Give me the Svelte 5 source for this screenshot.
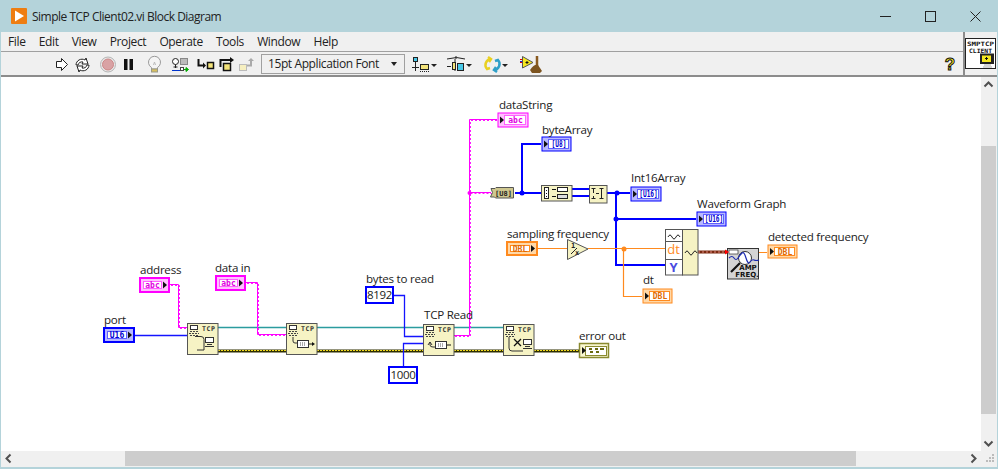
<script>
  const menus = ['File', 'Edit', 'View', 'Project', 'Operate', 'Tools', 'Window', 'Help'];

  const labels = [
    ['address', 140, 275], ['data in', 215, 273], ['port', 104, 325],
    ['bytes to read', 366, 284], ['TCP Read', 424, 320], ['error out', 579, 341],
    ['dataString', 499, 110], ['byteArray', 542, 135], ['Int16Array', 631, 183],
    ['sampling frequency', 507, 239], ['dt', 643, 285], ['Waveform Graph', 697, 209],
    ['detected frequency', 768, 242]
  ];

  // controls have the heavy border and the arrow on the right, indicators the thin one
  const terminals = [
    { x: 139, y: 278, w: 31, h: 16, type: 't-str', text: 'abc', ctl: true },
    { x: 215, y: 276, w: 31, h: 16, type: 't-str', text: 'abc', ctl: true },
    { x: 103, y: 328, w: 32, h: 16, type: 't-int', text: 'U16', ctl: true },
    { x: 506, y: 242, w: 32, h: 15, type: 't-dbl', text: 'DBL', ctl: true },
    { x: 497, y: 113, w: 32, h: 16, type: 't-str', text: 'abc' },
    { x: 541, y: 137, w: 31, h: 16, type: 't-int', text: '[U8]' },
    { x: 630, y: 187, w: 32, h: 16, type: 't-int', text: '[U16]' },
    { x: 696, y: 212, w: 31, h: 16, type: 't-int', text: '[U16]' },
    { x: 642, y: 289, w: 31, h: 16, type: 't-dbl', text: 'DBL' },
    { x: 767, y: 245, w: 31, h: 15, type: 't-dbl', text: 'DBL' }
  ];

  const tcpNodes = [
    { x: 187, y: 324, kind: 'open' },
    { x: 286, y: 324, kind: 'write' },
    { x: 423, y: 325, kind: 'read' },
    { x: 503, y: 325, kind: 'close' }
  ];

  const strWires = [
    'M170 285.5H178.5V328.5H187',
    'M246 283.5H257.5V335.5H286',
    'M454 336.5H469.5V120.5H497',
    'M469.5 193.5H491'
  ];

  // the bracketed array labels are squeezed to fit the box
  const squeeze = (text) => (text.startsWith('[') ? text.length * 3.7 : undefined);
</script>

{#snippet grid(x, y)}
  <rect x={x + 0.5} y={y + 0.5} width="11" height="7" fill="#fff" stroke="#333" />
  <path d="M{x + 3} {y + 3}h6M{x + 3} {y + 5}h6" stroke="#555" stroke-dasharray="1 1" fill="none" />
{/snippet}

{#snippet pc(x, y)}
  <rect x={x + 0.5} y={y + 0.5} width="8" height="5" fill="#fff" stroke="#333" />
  <path d="M{x + 2} {y + 7.5}h5M{x} {y + 9.5}h9" stroke="#333" fill="none" />
{/snippet}

<div class="window">
  <header class="titlebar">
    <svg class="appicon" width="16" height="16" viewBox="0 0 16 16">
      <rect width="16" height="16" rx="1" fill="#ee7d11" />
      <path d="M4 2.5L13 8L4 13.5Z" fill="#fff" />
    </svg>
    <span class="title">Simple TCP Client02.vi Block Diagram</span>
    <div class="controls">
      <svg width="11" height="11" viewBox="0 0 11 11"><path d="M0 5.5H11" stroke="#222" /></svg>
      <svg width="11" height="11" viewBox="0 0 11 11"><rect x="0.5" y="0.5" width="10" height="10" fill="none" stroke="#222" /></svg>
      <svg width="11" height="11" viewBox="0 0 11 11"><path d="M0.5 0.5L10.5 10.5M10.5 0.5L0.5 10.5" stroke="#222" /></svg>
    </div>
  </header>

  <div class="top">
    <div class="bars">
      <nav class="menubar">
        {#each menus as m}<span>{m}</span>{/each}
      </nav>
      <div class="toolbar">
        <svg width="206" height="23" viewBox="52 53 206 23">
          <path d="M56.5 62.5h5v-3l6 6l-6 6v-3h-5z" fill="#fff" stroke="#222" />
          <path d="M76 66a6 6 0 0 1 9-5l1-2 2 6-6 0 1-2a4 4 0 0 0-5 3zM89 66a6 6 0 0 1-9 5l-1 2-2-6 6 0-1 2a4 4 0 0 0 5-3z" fill="#fff" stroke="#222" />
          <circle cx="108" cy="65.5" r="7.5" fill="#e8e8e8" stroke="#b5b5b5" />
          <circle cx="108" cy="65.5" r="5.5" fill="#d9a2a4" stroke="#c88" />
          <rect x="124" y="60" width="3.5" height="11" fill="#111" />
          <rect x="129.5" y="60" width="3.5" height="11" fill="#111" />
          <path d="M151.5 68.5a6 6 0 1 1 6 0v1.5h-6z" fill="#f4f4f4" stroke="#999" />
          <path d="M153.5 66l1-3 1 3" fill="none" stroke="#bbb" />
          <rect x="151.5" y="70" width="6" height="3" fill="#d8c060" stroke="#998" />
          <circle cx="175.5" cy="62.5" r="3" fill="#fff" stroke="#222" />
          <path d="M175.5 65.5V69M173.5 68h4" stroke="#222" />
          <rect x="180.5" y="59.5" width="7" height="6" fill="#bbb" stroke="#888" />
          <path d="M172 71.5H180" stroke="#0033cc" />
          <rect x="180.5" y="68.5" width="3" height="3" fill="#fff" stroke="#444" />
          <path d="M184 70.5h3M186 68.5l2.5 2-2.5 2z" stroke="#0a0" fill="#0a0" />
          <path d="M198.5 60v6.5H204" fill="none" stroke="#111" stroke-width="2" />
          <path d="M203 63.5l3 3-3 3z" fill="#111" />
          <rect x="207.5" y="63.5" width="6" height="6" fill="#f3e37a" stroke="#111" stroke-width="1.5" />
          <path d="M220.5 68v-7h10" fill="none" stroke="#111" stroke-width="2" />
          <path d="M230 58l4 3-4 3z" fill="#111" />
          <rect x="223.5" y="64.5" width="7" height="7" fill="#f3e37a" stroke="#111" stroke-width="1.5" />
          <rect x="239.5" y="65.5" width="7" height="6" fill="#f6efc0" stroke="#bbb" />
          <path d="M247 66.5h4v-5" fill="none" stroke="#aaa" stroke-width="2" />
          <path d="M248 62l3-3 3 3z" fill="#aaa" />
        </svg>
        <div class="fontbox">
          <span>15pt Application Font</span>
          <i class="caret"></i>
        </div>
        <svg class="tools" width="140" height="23" viewBox="408 53 140 23">
          <rect x="413.5" y="58.5" width="4" height="4" fill="#48c8e8" stroke="#222" />
          <path d="M415.5 63v9M412 68.5h7" stroke="#222" />
          <rect x="420.5" y="65.5" width="8" height="5" fill="#f3e37a" stroke="#222" />
          <path d="M420 72.5h9" stroke="#222" stroke-dasharray="1 1" />
          <path d="M431 65h6l-3 3z" fill="#222" />
          <path d="M447 60q10-3 18 0M456 57v3" fill="none" stroke="#222" />
          <path d="M447 67.5h4M455 60v12" stroke="#222" />
          <rect x="452.5" y="63.5" width="3" height="7" fill="#f3e37a" stroke="#222" />
          <rect x="457.5" y="64.5" width="6" height="7" fill="#48c8e8" stroke="#222" />
          <path d="M466 65h6l-3 3z" fill="#222" />
          <path d="M491 60a6 6 0 0 0-4 10l3-1M488 58l3 2-2 3" fill="none" stroke="#e8d020" stroke-width="2.5" />
          <path d="M494 71a6 6 0 0 0 4-10l-3 1M497 73l-3-2 2-3" fill="none" stroke="#2f9fc8" stroke-width="2.5" />
          <path d="M502 65h6l-3 3z" fill="#222" />
          <path d="M520 60.5h6M520 63.5h6" stroke="#d00" />
          <path d="M520 62.5h6" stroke="#22c" />
          <path d="M522.5 57.5L533 63.5L522.5 69z" fill="#f6e820" stroke="#555" />
          <path d="M525.5 63.5h3M527 62v3" stroke="#111" />
          <path d="M537 57v10" stroke="#8a5a20" stroke-width="2.5" />
          <path d="M530 71q4-6 8-5l4 6-2 2h-8z" fill="#7c5420" />
        </svg>
        <svg class="help" width="14" height="20" viewBox="0 0 14 20">
          <text x="7" y="16" text-anchor="middle" class="qmark">?</text>
        </svg>
      </div>
    </div>
    <div class="vipane">
      <svg width="31" height="32" viewBox="0 0 31 32">
        <rect x="0.5" y="0.5" width="30" height="30" fill="#fff" stroke="#222" />
        <text x="15.5" y="7.8" text-anchor="middle" class="vitext" textLength="27" lengthAdjust="spacingAndGlyphs">SMPTCP</text>
        <text x="15.5" y="15" text-anchor="middle" class="vitext" textLength="23" lengthAdjust="spacingAndGlyphs">CLIENT</text>
        <rect x="15" y="15.5" width="14" height="10.5" fill="#222" />
        <rect x="17" y="17.5" width="9" height="6.5" fill="#f6e820" />
        <path d="M20 20.5h3M21.5 19v3" stroke="#111" />
        <path d="M19 27h7M18 29h9" stroke="#aaa" />
      </svg>
    </div>
  </div>

  <div class="content">
    <div class="canvas">
      <svg class="diagram" width="980" height="374" viewBox="1 78 980 374">
        <!-- refnum and error wires -->
        <path class="wire refnum" d="M218 328.5H286M317 328.5H423M454 328.5H503" />
        <path class="wire err-base" d="M218 352H286M317 352H423M454 352H503M534 352H579" />
        <path class="wire err-top" d="M218 351.5H286M317 351.5H423M454 351.5H503M534 351.5H579" />

        <!-- scalar ints -->
        <path class="wire w-int" d="M135 336.5H187M394 296.5H404.5V337.5H423M403.5 367V344.5H423" />

        <!-- strings -->
        {#each strWires as d}
          <path class="wire w-str" {d} />
          <path class="wire w-str alt" {d} />
        {/each}

        <!-- arrays -->
        <path class="wire w-arr" d="M515 194H541M522 194V145H541M572 190H589M572 197H589M607 194H630M616 194V266H665M616 220H696" />

        <!-- doubles -->
        <path class="wire w-dbl" d="M538 249.5H567M588 249.5H665M623.5 249.5V297.5H642M759 253.5H767" />

        <!-- waveform -->
        <path class="wire wf-base" d="M698 253H728" />
        <path class="wire wf-top" d="M698 253H728" />

        <circle cx="469.5" cy="194" r="2" fill="#f0f" />
        <circle cx="522" cy="194" r="2.5" fill="#00f" />
        <circle cx="617" cy="194" r="2.5" fill="#00f" />
        <circle cx="616" cy="220" r="2.5" fill="#00f" />
        <circle cx="624" cy="250" r="2.5" fill="#ff8a1e" />

        {#each tcpNodes as n}
          <g transform="translate({n.x} {n.y})">
            <rect class="node" x="0.5" y="0.5" width="30.5" height="31" />
            <rect x="3.5" y="2.5" width="7" height="4" fill="#fff" stroke="#333" />
            <path d="M3 8.5h8M2 10.5h10M3 12.5h9" stroke="#444" stroke-dasharray="2 1" fill="none" />
            <text class="tcp" x="15" y="8">TCP</text>
            {#if n.kind === 'open'}
              <path d="M8 13.5h6q3 0 3 3V27H10" fill="none" stroke="#333" />
              {@render pc(18, 14)}
            {:else if n.kind === 'write'}
              <path d="M7 14v4q0 2 2 2h2" fill="none" stroke="#333" />
              {@render grid(11, 17)}
              <path d="M23 21h4" stroke="#111" />
              <path d="M26 19l3 2-3 2z" fill="#111" />
            {:else if n.kind === 'read'}
              <path d="M7 18l-2 3M7 18l2 3M7 18v3q0 2 3 2h2" fill="none" stroke="#333" />
              {@render grid(12, 17)}
              <path d="M24 21h4" stroke="#111" />
            {:else}
              <path d="M11 15l7 7M18 15l-7 7" stroke="#111" stroke-width="1.3" />
              <path d="M6 13v11q0 3 3 3h11" fill="none" stroke="#333" />
              {@render pc(20, 15)}
            {/if}
          </g>
        {/each}

        <!-- string to byte array cast -->
        <path d="M491 189.5h4l1-1h17.5v10.5h-18l-1-1h-4l2-4.5z" fill="#cfc78f" stroke="#555" />
        <text class="tiny" x="503.5" y="197" text-anchor="middle">[U8]</text>

        <!-- split array -->
        <rect class="node" x="541.5" y="186.5" width="30.5" height="15.5" />
        <rect x="544.5" y="188.5" width="4" height="11" fill="#fff" stroke="#222" />
        <path d="M546.5 191v1M546.5 194v1M546.5 197v1" stroke="#111" />
        <path d="M552 190.5h4M552 197.5h4" stroke="#111" />
        <rect x="557.5" y="188.5" width="10" height="4" fill="#fff" stroke="#222" />
        <rect x="557.5" y="195.5" width="10" height="4" fill="#ddd" stroke="#222" />

        <!-- join numbers -->
        <rect class="node" x="589.5" y="186.5" width="17.5" height="17.5" />
        <path d="M593.5 189v5M591.5 189.5h4M591.5 199.5h4M593.5 197v3M601.5 190v9M599.5 189.5h4M599.5 199.5h4" stroke="#222" fill="none" />
        <path d="M596 194.5h3" stroke="#222" />

        <!-- reciprocal -->
        <path d="M567.5 240.5L588 250L567.5 260.5z" fill="#f6f3c4" stroke="#555" />
        <text class="tiny" x="571" y="249">1</text>
        <path d="M571 255l6-6" stroke="#222" />
        <text class="tiny" x="575" y="256">x</text>

        <!-- build waveform -->
        <rect x="665.5" y="230.5" width="17" height="45.5" fill="#fff" stroke="#555" />
        <rect class="node" x="682.5" y="230.5" width="15.5" height="45.5" />
        <path d="M665 242.5h17M665 260.5h17" stroke="#555" />
        <path d="M668 238q2-4 4 0t4 0 4 0M685 254q2-4 4 0t4 0 4 0" fill="none" stroke="#222" />
        <text class="bundle-dt" x="673.5" y="255" text-anchor="middle">dt</text>
        <text class="bundle-y" x="673.5" y="273" text-anchor="middle">Y</text>

        <!-- amplitude and frequency -->
        <rect x="727.5" y="249.5" width="31" height="30.5" fill="#d4d4d4" stroke="#333" />
        <rect x="729" y="251" width="9" height="4" fill="#fff" stroke="#333" stroke-width="0.7" />
        <circle cx="745" cy="259" r="6.5" fill="#fff" stroke="#333" />
        <path d="M729 259q3-3 5 0t4 0 4-5 4 5 4 4 4-2 5 0" fill="none" stroke="#1a2ab0" stroke-width="1.2" />
        <path d="M740 264l-9 9" stroke="#111" stroke-width="2.2" />
        <text class="amp" x="748" y="271" text-anchor="middle">AMP</text>
        <text class="amp" x="747" y="278" text-anchor="middle">FREQ.</text>
        <path d="M725 250.5l4 2.5-4 2.5z" fill="#f00" />

        {#each terminals as t}
          <g class="term {t.type}" class:ctl={t.ctl}>
            <rect class="outer" x={t.x + 1} y={t.y + 1} width={t.w - 2} height={t.h - 2} />
            {#if t.ctl}
              <rect class="inner" x={t.x + 4.5} y={t.y + 4.5} width={t.w - 13} height={t.h - 9} />
              <text class="tlabel" x={t.x + (t.w - 4) / 2} y={t.y + t.h / 2 + 3} text-anchor="middle">{t.text}</text>
              <path d="M{t.x + t.w - 7} {t.y + t.h / 2 - 3.5}l4 3.5-4 3.5z" fill="#111" />
            {:else}
              <rect class="inner" x={t.x + 7.5} y={t.y + 3.5} width={t.w - 11} height={t.h - 7} />
              <text class="tlabel" x={t.x + (t.w + 5) / 2} y={t.y + t.h / 2 + 3} text-anchor="middle" textLength={squeeze(t.text)} lengthAdjust="spacingAndGlyphs">{t.text}</text>
              <path d="M{t.x + 3} {t.y + t.h / 2 - 3.5}l4 3.5-4 3.5z" fill="#111" />
            {/if}
          </g>
        {/each}

        <!-- error out -->
        <rect x="579.5" y="344.5" width="29" height="14" fill="#f8f6cf" stroke="#8a8a30" stroke-width="1.5" />
        <rect x="585.5" y="347.5" width="21" height="9" fill="#fff" stroke="#8a8a30" />
        <path d="M582 348l4 3.5-4 3.5z" fill="#111" />
        <path d="M589 350h3M595 350h3M600 350h4M590 353h3M596 353h3" stroke="#6a6a10" stroke-width="2" />

        <!-- numeric constants -->
        <rect class="const" x="366" y="288" width="27" height="16" />
        <text class="ctext" x="379.5" y="300" text-anchor="middle">8192</text>
        <rect class="const" x="389" y="368" width="28" height="16" />
        <text class="ctext" x="403" y="380" text-anchor="middle">1000</text>

        {#each labels as [text, x, y]}
          <text class="label" {x} {y}>{text}</text>
        {/each}
      </svg>
    </div>

    <div class="vscroll">
      <svg width="15" height="15" viewBox="0 0 15 15"><path d="M3.5 9.5L7.5 5.5L11.5 9.5" class="chev" /></svg>
      <div class="vtrack"><div class="vthumb"></div></div>
      <svg width="15" height="15" viewBox="0 0 15 15"><path d="M3.5 5.5L7.5 9.5L11.5 5.5" class="chev" /></svg>
    </div>

    <div class="hscroll">
      <svg width="15" height="15" viewBox="0 0 15 15"><path d="M9.5 3.5L5.5 7.5L9.5 11.5" class="chev" /></svg>
      <div class="htrack"><div class="hthumb"></div></div>
      <svg width="15" height="15" viewBox="0 0 15 15"><path d="M5.5 3.5L9.5 7.5L5.5 11.5" class="chev" /></svg>
    </div>

    <div class="corner">
      <svg width="15" height="15" viewBox="0 0 15 15">
        <path d="M11 3h2v2h-2zM8 6h2v2H8zM11 6h2v2h-2zM5 9h2v2H5zM8 9h2v2H8zM11 9h2v2h-2z" fill="#bbb" />
      </svg>
    </div>
  </div>
</div>

<style>
  :global(body) {
    margin: 0;
    overflow: hidden;
  }

  .window {
    width: 998px;
    height: 469px;
    box-sizing: border-box;
    padding: 0 1px 2px 1px;
    background: #b4d3da;
    display: flex;
    flex-direction: column;
    font-family: "Open Sans", "Noto Sans", sans-serif;
    color: #222;
  }

  svg {
    display: block;
    flex: none;
  }

  .titlebar {
    height: 32px;
    display: flex;
    align-items: center;
    padding-left: 10px;
  }

  .title {
    font-size: 12px;
    margin-left: 5px;
    letter-spacing: -0.5px;
  }

  .controls {
    margin-left: auto;
    display: flex;
    gap: 34px;
    padding-right: 16px;
  }

  .top {
    display: flex;
    height: 45px;
    background: #f0f0f0;
  }

  .bars {
    flex: 1;
    display: flex;
    flex-direction: column;
  }

  .menubar {
    height: 20px;
    box-sizing: border-box;
    border-bottom: 1px solid #a0a0a0;
    display: flex;
    align-items: center;
    gap: 13.2px;
    padding: 0 0 1px 7px;
    font-size: 12px;
    letter-spacing: -0.37px;
  }

  .toolbar {
    flex: 1;
    display: flex;
    align-items: center;
    padding-left: 51px;
    border-bottom: 2px solid #8c8c8c;
  }

  .fontbox {
    width: 144px;
    height: 20px;
    box-sizing: border-box;
    margin-left: 3px;
    border: 1px solid #a0a0a0;
    background: #f0f0f0;
    display: flex;
    align-items: center;
    justify-content: space-between;
    padding: 0 7px 0 6px;
    font-size: 12px;
    letter-spacing: -0.4px;
  }

  .caret {
    width: 0;
    height: 0;
    border: 3.5px solid transparent;
    border-top: 4px solid #222;
    border-bottom: 0;
  }

  .tools {
    margin-left: 3px;
  }

  .help {
    margin-left: auto;
    margin-right: 6px;
  }

  .qmark {
    font: bold 17px "Liberation Sans", sans-serif;
    fill: #f6e820;
    stroke: #111;
    stroke-width: 1;
  }

  .vipane {
    width: 34px;
    border-left: 2px solid #8c8c8c;
    border-bottom: 2px solid #8c8c8c;
    box-sizing: border-box;
    padding-top: 6px;
  }

  .vitext {
    font: bold 6px "DejaVu Sans Mono", monospace;
    fill: #111;
  }

  .content {
    flex: 1;
    display: grid;
    grid-template-columns: 980px 16px;
    grid-template-rows: 374px 15px;
    background: #f0f0f0;
  }

  .canvas {
    background: #fff;
    overflow: hidden;
  }

  .vscroll {
    display: flex;
    flex-direction: column;
    padding-right: 1px;
  }

  .vtrack {
    flex: 1;
    display: flex;
    flex-direction: column;
    padding: 54px 0 22px;
  }

  .vthumb {
    flex: 1;
    background: #cdcdcd;
  }

  .hscroll {
    display: flex;
  }

  .htrack {
    flex: 1;
    padding: 0 110px 0 109px;
  }

  .hthumb {
    height: 100%;
    background: #cdcdcd;
  }

  .chev {
    fill: none;
    stroke: #505050;
    stroke-width: 2;
  }

  .wire {
    fill: none;
  }

  .refnum {
    stroke: #2b9c9f;
    stroke-width: 1.4;
  }

  .err-base {
    stroke: #2e2e00;
    stroke-width: 3;
  }

  .err-top {
    stroke: #f4dc1e;
    stroke-width: 1;
    stroke-dasharray: 2 1;
  }

  .w-int {
    stroke: #1414ff;
    stroke-width: 1.3;
  }

  .w-str {
    stroke: #ff00ff;
  }

  .w-str.alt {
    transform: translate(1px, 1px);
    stroke-dasharray: 2 2;
    stroke-width: 0.9;
  }

  .w-arr {
    stroke: #0000ff;
    stroke-width: 2;
  }

  .w-dbl {
    stroke: #ff8a1e;
    stroke-width: 1.2;
  }

  .wf-base {
    stroke: #7a2a10;
    stroke-width: 3;
  }

  .wf-top {
    stroke: #e08a80;
    stroke-dasharray: 2 2;
  }

  .node {
    fill: #f6f3c4;
    stroke: #555;
  }

  .tcp {
    font: bold 6.5px "DejaVu Sans Mono", monospace;
    letter-spacing: 0.6px;
    fill: #333;
  }

  .tiny {
    font: bold 7px "DejaVu Sans Mono", monospace;
    fill: #222;
  }

  .term .outer {
    stroke-width: 1;
  }

  .term.ctl .outer {
    stroke-width: 2;
  }

  .term .inner {
    fill: #fff;
  }

  .tlabel {
    font: bold 8px "DejaVu Sans Mono", monospace;
  }

  .t-str .outer { stroke: #ff00ff; fill: #ffc0ff; }
  .t-str .inner { stroke: #ff60ff; }
  .t-str .tlabel { fill: #e000e0; }
  .t-int .outer { stroke: #0000ff; fill: #b8b8ff; }
  .t-int .inner { stroke: #6060ff; }
  .t-int .tlabel { fill: #0000d0; }
  .t-dbl .outer { stroke: #ff8a1e; fill: #ffd8a8; }
  .t-dbl .inner { stroke: #ff8a1e; }
  .t-dbl .tlabel { fill: #e06a00; }

  .const {
    fill: #fff;
    stroke: #0000ff;
    stroke-width: 2;
  }

  .ctext {
    font-family: "Open Sans", "Noto Sans", sans-serif;
    font-size: 11.5px;
    letter-spacing: -0.3px;
    fill: #222;
  }

  .label {
    font-family: "Open Sans", "Noto Sans", sans-serif;
    font-size: 11.6px;
    letter-spacing: -0.25px;
    fill: #222;
  }

  .bundle-dt {
    font: 13px "Open Sans", sans-serif;
    fill: #ff8a1e;
  }

  .bundle-y {
    font: bold 13px "Open Sans", sans-serif;
    fill: #4a4ae0;
  }

  .amp {
    font: bold 7px "DejaVu Sans", sans-serif;
    fill: #111;
  }
</style>
